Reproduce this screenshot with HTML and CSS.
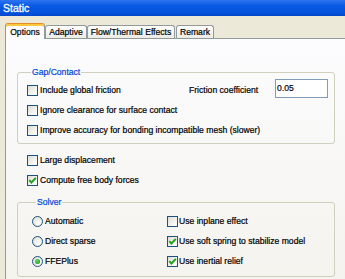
FILE: index.html
```html
<!DOCTYPE html>
<html>
<head>
<meta charset="utf-8">
<link rel="stylesheet" href="styles.css">
</head>
<body>
<div class="titlebar">Static</div>
<div class="tabs">
  <div class="tab active w-options">Options</div>
  <div class="tab w-adaptive">Adaptive</div>
  <div class="tab w-flow">Flow/Thermal Effects</div>
  <div class="tab w-remark">Remark</div>
</div>
<div class="panel">
  <fieldset class="group gap">
    <legend>Gap/Contact</legend>
    <div class="row">
      <div class="opt first"><span class="cb"></span>Include global friction</div>
      <div class="flabel">Friction coefficient</div>
      <div class="input">0.05</div>
    </div>
    <div class="row"><span class="cb"></span>Ignore clearance for surface contact</div>
    <div class="row"><span class="cb"></span>Improve accuracy for bonding incompatible mesh (slower)</div>
  </fieldset>
  <div class="loose">
    <div class="row"><span class="cb"></span>Large displacement</div>
    <div class="row"><span class="cb checked"><svg viewBox="0 0 9 9" width="9" height="9"><path d="M1.3 4.2 L3.4 6.5 L7.8 1.8" fill="none" stroke="#21a121" stroke-width="1.9"/></svg></span>Compute free body forces</div>
  </div>
  <fieldset class="group solver">
    <legend>Solver</legend>
    <div class="grid">
      <div class="row"><span class="rb"></span>Automatic</div>
      <div class="row"><span class="cb"></span>Use inplane effect</div>
      <div class="row"><span class="rb"></span>Direct sparse</div>
      <div class="row"><span class="cb checked"><svg viewBox="0 0 9 9" width="9" height="9"><path d="M1.3 4.2 L3.4 6.5 L7.8 1.8" fill="none" stroke="#21a121" stroke-width="1.9"/></svg></span>Use soft spring to stabilize model</div>
      <div class="row"><span class="rb on"><span class="dot"></span></span>FFEPlus</div>
      <div class="row"><span class="cb checked"><svg viewBox="0 0 9 9" width="9" height="9"><path d="M1.3 4.2 L3.4 6.5 L7.8 1.8" fill="none" stroke="#21a121" stroke-width="1.9"/></svg></span>Use inertial relief</div>
    </div>
  </fieldset>
</div>
</body>
</html>
```
FILE: styles.css
```css
* { box-sizing: border-box; }
html, body { margin: 0; padding: 0; }
body {
  width: 345px;
  height: 279px;
  overflow: hidden;
  background: #ece9d8;
  font-family: "Liberation Sans", Arial, sans-serif;
  font-size: 8.6px;
  color: #000;
  -webkit-text-stroke: 0.2px #000;
}
.titlebar {
  height: 16px;
  line-height: 16px;
  padding-left: 3px;
  color: #fff;
  font-size: 10.5px;
  -webkit-text-stroke: 0.3px #fff;
  background: linear-gradient(#2c74f2 0%, #0a5ae4 35%, #0552dc 80%, #0347c8 100%);
}
.tabs {
  display: flex;
  align-items: flex-end;
  height: 15px;
  margin: 7px 0 0 5px;
  position: relative;
  z-index: 1;
}
.tab {
  height: 13px;
  line-height: 12px;
  text-align: center;
  border: 1px solid #919b9c;
  border-bottom: none;
  border-radius: 3px 3px 0 0;
  background: linear-gradient(#ffffff, #ecebe5);
  white-space: nowrap;
}
.tab.active {
  height: 16px;
  margin-bottom: -1px;
  line-height: 14px;
  padding-top: 1px;
  background: #fcfcfe;
  border-top: 1px solid #e68b2c;
  box-shadow: inset 0 2px 0 #ffc73c;
}
.w-options { width: 40px; }
.w-adaptive { width: 42px; }
.w-flow { width: 88px; }
.w-remark { width: 38px; margin-left: 1px; }
.panel {
  margin-left: 5px;
  height: 245px;
  border-top: 1px solid #919b9c;
  border-left: 1px solid #919b9c;
  background: linear-gradient(#fcfcfe, #f4f3ee);
  padding-top: 28px;
}
.group {
  margin: 0 0 0 11px;
  padding: 0;
  width: 318px;
  min-inline-size: 0;
  border: 1px solid #d0d0bf;
  border-radius: 3px;
}
.group legend {
  margin-left: 4px;
  padding: 0 1px;
  line-height: 10px;
  color: #0046d5;
  -webkit-text-stroke: 0.2px #0046d5;
}
.gap { padding: 3px 0 3px 9px; }
.row {
  display: flex;
  align-items: center;
  height: 20px;
  white-space: nowrap;
}
.opt.first {
  width: 162px;
  display: flex;
  align-items: center;
}
.flabel { width: 86px; }
.input {
  width: 53px;
  height: 19px;
  margin-top: -4px;
  line-height: 17px;
  padding-left: 1px;
  border: 1px solid #7f9db9;
  background: #fff;
}
.loose {
  margin: 6px 0 0 21px;
}
.solver {
  margin-top: 7px;
  padding: 4px 0 5px 14px;
}
.grid {
  display: grid;
  grid-template-columns: 135px auto;
  grid-auto-rows: 20px;
}
.cb {
  width: 11px;
  height: 11px;
  margin-right: 2px;
  flex: none;
  border: 1px solid #1c5180;
  background: linear-gradient(135deg, #dcdcd7 0%, #f0f0ea 50%, #ffffff 100%);
  display: flex;
  align-items: center;
  justify-content: center;
}
.grid .cb { margin-right: 1px; }
.cb svg { display: block; }
.rb {
  width: 11px;
  height: 11px;
  margin-right: 2px;
  flex: none;
  border: 1px solid #1c5180;
  border-radius: 50%;
  background: radial-gradient(circle at 65% 65%, #ffffff 0%, #e8e8e2 60%, #d4d4cc 100%);
  display: flex;
  align-items: center;
  justify-content: center;
}
.rb .dot {
  width: 5px;
  height: 5px;
  border-radius: 50%;
  background: radial-gradient(circle at 40% 40%, #6ed86e, #21a121 70%);
}
```
